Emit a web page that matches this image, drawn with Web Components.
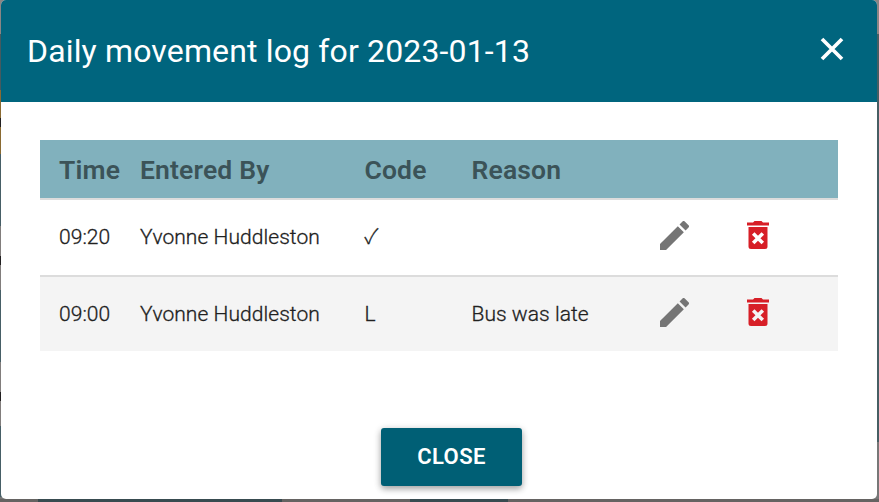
<!DOCTYPE html>
<html lang="en">
<head>
<meta charset="utf-8">
<title>Daily movement log</title>
<style>
  body {
    margin: 0;
    height: 502px;
    overflow: hidden;
    font-family: Roboto, "Liberation Sans", sans-serif;
    color: #212121;
    background:
      linear-gradient(90deg, #656362 38px, #384b50 38px 282px, #656362 282px 410px, #384b50 410px 508px, #656362 508px) 0 499px / 100% 3px no-repeat,
      linear-gradient(#8b8584 34px, #465a5f 34px 90px, #8a6a32 90px 118px, #211f20 118px 127px, #8a6a32 127px 154px, #465e66 154px 226px, #817d7c 226px 256px, #211f20 256px 265px, #817d7c 265px 290px, #465e66 290px 362px, #817d7c 362px 392px, #211f20 392px 401px, #817d7c 401px 426px, #465e66 426px 497px, #777 497px) 0 0 / 4px 100% no-repeat,
      linear-gradient(#8b8584 34px, #465e63 34px 442px, #777 442px) 100% 0 / 8px 100% no-repeat,
      #656362;
  }
</style>
</head>
<body>

<modal-dialog heading="Daily movement log for 2023-01-13">
  <movement-table>
    <movement-row time="09:20" by="Yvonne Huddleston" code="✓"></movement-row>
    <movement-row time="09:00" by="Yvonne Huddleston" code="L" reason="Bus was late" shaded></movement-row>
  </movement-table>
  <raised-button slot="actions">Close</raised-button>
</modal-dialog>

<script>
const dialogTemplate = document.createElement("template");

dialogTemplate.innerHTML = `
<style>
  :host {
    display: flex;
    flex-direction: column;
    box-sizing: border-box;
    width: 876px;
    height: 499px;
    margin: 0 0 0 1px;
    border-radius: 5px;
    overflow: hidden;
    background: #fff;
  }
  header {
    display: flex;
    align-items: center;
    justify-content: space-between;
    box-sizing: border-box;
    height: 102px;
    padding: 0 33px 0 26px;
    background: #00657e;
    color: #fff;
  }
  h2 {
    margin: 0;
    font-size: 32px;
    line-height: 40px;
    font-weight: 400;
    letter-spacing: .15px;
  }
  button {
    display: flex;
    padding: 0;
    border: 0;
    background: none;
    color: inherit;
  }
  header svg {
    display: block;
    margin-top: -4px;
  }
  main {
    flex: 1;
    padding: 38px 39px 0;
  }
  footer {
    display: flex;
    justify-content: center;
    padding: 0 0 13px 25px;
  }
</style>
<header>
  <h2></h2>
  <button aria-label="Close">
    <svg width="24" height="24" viewBox="0 0 24 24" fill="none" stroke="currentColor" stroke-width="3.7">
      <path d="M2 2 22 22M22 2 2 22"/>
    </svg>
  </button>
</header>
<main><slot></slot></main>
<footer><slot name="actions"></slot></footer>
`;

class ModalDialog extends HTMLElement {
  constructor() {
    super();
    this.attachShadow({ mode: "open" });
  }

  connectedCallback() {
    const template = dialogTemplate.content.cloneNode(true);
    template.querySelector("h2").textContent = this.getAttribute("heading");
    this.shadowRoot.appendChild(template);
  }
}

customElements.define("modal-dialog", ModalDialog);

// header and rows use the same columns
const columns = "81px 224.5px 107px 188px 87.5px 1fr";

const tableTemplate = document.createElement("template");

tableTemplate.innerHTML = `
<style>
  :host {
    display: block;
  }
  .head {
    display: grid;
    grid-template-columns: ${columns};
    align-items: center;
    height: 58px;
    padding: 1px 0 0 19px;
    box-sizing: border-box;
    background: #81b1bd;
    color: #3b5358;
    font-size: 26.5px;
    font-weight: 600;
    line-height: 30px;
    letter-spacing: .15px;
  }
</style>
<div class="head">
  <span>Time</span>
  <span>Entered By</span>
  <span>Code</span>
  <span>Reason</span>
</div>
<slot></slot>
`;

class MovementTable extends HTMLElement {
  constructor() {
    super();
    this.attachShadow({ mode: "open" });
    this.shadowRoot.appendChild(tableTemplate.content.cloneNode(true));
  }
}

customElements.define("movement-table", MovementTable);

const rowTemplate = document.createElement("template");

rowTemplate.innerHTML = `
<style>
  :host {
    display: grid;
    grid-template-columns: ${columns};
    align-items: center;
    box-sizing: border-box;
    height: 77px;
    padding: 0 0 1px 19px;
    border-top: 2px solid #dcdcdc;
    font-size: 21px;
    font-weight: 300;
    line-height: 26px;
    letter-spacing: .05px;
    -webkit-text-stroke: .3px currentColor;
  }
  :host([shaded]) {
    height: 76px;
    padding-bottom: 0;
    background: #f4f4f4;
  }
  .code {
    font-family: Roboto, "Noto Sans CJK JP", sans-serif;
  }
  svg {
    display: block;
    margin-top: -4px;
  }
  .edit {
    fill: #757575;
  }
  .delete {
    fill: #d71f27;
  }
</style>
<span class="time"></span>
<span class="by"></span>
<span class="code"></span>
<span class="reason"></span>
<svg class="edit" width="29" height="29" viewBox="3 3 18 18">
  <path d="M3 17.25V21h3.75L17.81 9.94l-3.75-3.75L3 17.25zM20.71 7.04a1 1 0 0 0 0-1.41l-2.34-2.34a1 1 0 0 0-1.41 0l-1.83 1.83 3.75 3.75 1.83-1.83z"/>
</svg>
<svg class="delete" width="22" height="28" viewBox="0 0 22 28">
  <path d="M0 1.500h6L7.500 0h7L16 1.500h6V4.400H0zM1.500 6h19v19.500a2.500 2.500 0 0 1-2.500 2.500H4a2.500 2.500 0 0 1-2.500-2.500z"/>
  <path d="M6.200 12.400 15.800 22M15.800 12.400 6.200 22" class="cross" stroke="#fff" stroke-width="3.600"/>
</svg>
`;

class MovementRow extends HTMLElement {
  constructor() {
    super();
    this.attachShadow({ mode: "open" });
  }

  connectedCallback() {
    const template = rowTemplate.content.cloneNode(true);

    ["time", "by", "code", "reason"].forEach(name => {
      template.querySelector("." + name).textContent = this.getAttribute(name) || "";
    });

    if (this.hasAttribute("shaded")) {
      template.querySelector(".cross").setAttribute("stroke", "#f4f4f4");
    }

    this.shadowRoot.appendChild(template);
  }
}

customElements.define("movement-row", MovementRow);

const buttonTemplate = document.createElement("template");

buttonTemplate.innerHTML = `
<style>
  :host {
    display: block;
  }
  button {
    display: block;
    box-sizing: border-box;
    width: 141px;
    height: 58px;
    padding: 0 0 2px;
    border: 0;
    border-radius: 3px;
    background: #005f75;
    box-shadow: 0 3px 6px rgba(0, 0, 0, .3), 0 1px 8px rgba(0, 0, 0, .12);
    color: #fff;
    font: 600 22px Roboto, sans-serif;
    letter-spacing: .4px;
    text-transform: uppercase;
  }
</style>
<button><slot></slot></button>
`;

class RaisedButton extends HTMLElement {
  constructor() {
    super();
    this.attachShadow({ mode: "open" });
    this.shadowRoot.appendChild(buttonTemplate.content.cloneNode(true));
  }
}

customElements.define("raised-button", RaisedButton);
</script>
</body>
</html>
